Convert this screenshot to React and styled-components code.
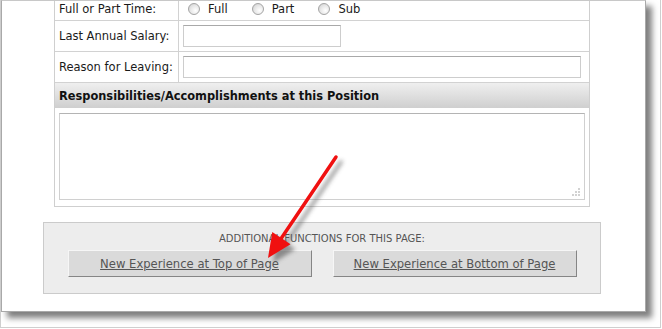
import React from "react";
import styled, { createGlobalStyle } from "styled-components";

const GlobalStyle = createGlobalStyle`
  html, body { margin: 0; padding: 0; background: #ffffff; }
  body { font-family: "DejaVu Sans", Verdana, sans-serif; }
  * { box-sizing: border-box; }
`;

const Frame = styled.div`
  position: relative;
  width: 661px;
  height: 328px;
  border: 1px solid #cfcfcf;
  border-top: none;
  background: #ffffff;
`;

const Paper = styled.div`
  width: 645px;
  height: 312px;
  background: #ffffff;
  border: 1px solid #a9a9a9;
  border-top-color: #c8c8c8;
  box-shadow: 6px 6px 6px rgba(0, 0, 0, 0.5);
  display: flex;
  flex-direction: column;
`;

const FormTable = styled.div`
  margin-left: 52px;
  width: 536px;
  border: 1px solid #cfcfcf;
  border-top: none;
  display: flex;
  flex-direction: column;
`;

const Row = styled.div`
  display: grid;
  grid-template-columns: 124px 1fr;
  height: ${(p) => p.$h}px;
  border-bottom: 1px solid #d2d2d2;
`;

const LabelCell = styled.div`
  border-right: 1px solid #d2d2d2;
  padding: 0 0 ${(p) => p.$pb || 0}px 4px;
  display: flex;
  align-items: center;
  font-size: 11.5px;
  color: #1a1a1a;
  white-space: nowrap;
`;

const ValueCell = styled.div`
  padding: 0 0 ${(p) => p.$pb || 0}px 4px;
  display: flex;
  align-items: center;
`;

const RadioGroup = styled.div`
  display: flex;
  align-items: center;
  gap: 19px;
  font-size: 11.5px;
  color: #1a1a1a;
`;

const RadioOption = styled.label`
  display: flex;
  align-items: center;
  gap: 8px;
`;

const Radio = styled.input.attrs({ type: "radio" })`
  appearance: none;
  -webkit-appearance: none;
  margin: 0 0 0 5px;
  width: 12px;
  height: 12px;
  border-radius: 50%;
  border: 1px solid #a4a4a4;
  background: radial-gradient(circle at 65% 65%, #ffffff 0%, #e6e6e6 55%, #c9c9c9 100%);
`;

const TextInput = styled.input`
  width: ${(p) => p.$w}px;
  height: 22px;
  margin: 0;
  border: 1px solid #cdcdcd;
  border-top-color: #a9a9a9;
  background: #ffffff;
  font-family: inherit;
  font-size: 11px;
`;

const Header = styled.div`
  height: 25px;
  padding: 0 0 0 4px;
  display: flex;
  align-items: center;
  background: linear-gradient(#efefef, #cfcfcf);
  font-size: 11.4px;
  font-weight: bold;
  color: #111111;
  white-space: nowrap;
`;

const AreaCell = styled.div`
  padding: 5px 4px 6px 4px;
`;

const AreaWrap = styled.div`
  position: relative;
  width: 526px;
  height: 87px;
`;

const TextArea = styled.textarea`
  display: block;
  width: 100%;
  height: 100%;
  margin: 0;
  resize: none;
  border: 1px solid #d0d0d0;
  border-top-color: #b4b4b4;
  background: #ffffff;
`;

const Grip = styled.svg`
  position: absolute;
  right: 4px;
  bottom: 3px;
  width: 10px;
  height: 10px;
`;

const Panel = styled.div`
  margin: 15px 0 0 41px;
  width: 558px;
  height: 72px;
  border: 1px solid #cbcbcb;
  background: #ededed;
  padding-top: 9px;
  display: flex;
  flex-direction: column;
  align-items: center;
  gap: 4px;
`;

const PanelTitle = styled.div`
  font-size: 10px;
  line-height: 14px;
  color: #555555;
  text-transform: uppercase;
  white-space: nowrap;
`;

const ButtonRow = styled.div`
  display: flex;
  gap: 21px;
`;

const ActionButton = styled.button`
  width: 244px;
  height: 27px;
  margin: 0;
  padding: 0;
  background: #dadada;
  border: 1px solid;
  border-color: #f6f6f6 #858585 #858585 #f6f6f6;
  font-family: inherit;
  font-size: 11.6px;
  color: #555555;
  text-decoration: underline;
  cursor: pointer;
`;

const ArrowLayer = styled.svg`
  position: absolute;
  left: 0;
  top: 0;
  width: 662px;
  height: 329px;
  pointer-events: none;
`;

function Arrow() {
  const tail = [335, 157];
  const tip = [267, 258];
  const dx = tip[0] - tail[0];
  const dy = tip[1] - tail[1];
  const len = Math.hypot(dx, dy);
  const ux = dx / len;
  const uy = dy / len;
  const hl = 24;
  const hw = 11;
  const bx = tip[0] - ux * hl;
  const by = tip[1] - uy * hl;
  const nx = -uy;
  const ny = ux;
  const head = `${tip[0]},${tip[1]} ${bx + nx * hw},${by + ny * hw} ${bx - nx * hw},${by - ny * hw}`;
  const lineEnd = [tip[0] - ux * (hl - 2), tip[1] - uy * (hl - 2)];
  const shape = (color) => (
    <>
      <line x1={tail[0]} y1={tail[1]} x2={lineEnd[0]} y2={lineEnd[1]} stroke={color} strokeWidth="3.5" strokeLinecap="round" />
      <polygon points={head} fill={color} />
    </>
  );
  return (
    <ArrowLayer viewBox="0 0 662 329">
      <defs>
        <filter id="arrowShadow" x="-20%" y="-20%" width="140%" height="140%">
          <feGaussianBlur stdDeviation="2.2" />
        </filter>
      </defs>
      <g transform="translate(5,5)" filter="url(#arrowShadow)" opacity="0.6">
        {shape("#555555")}
      </g>
      {shape("#f01010")}
    </ArrowLayer>
  );
}

export default function App() {
  return (
    <>
      <GlobalStyle />
      <Frame>
        <Paper>
          <FormTable>
            <Row $h={20}>
              <LabelCell $pb={4}>Full or Part Time:</LabelCell>
              <ValueCell $pb={4}>
                <RadioGroup>
                  <RadioOption><Radio name="fpt" />Full</RadioOption>
                  <RadioOption><Radio name="fpt" />Part</RadioOption>
                  <RadioOption><Radio name="fpt" />Sub</RadioOption>
                </RadioGroup>
              </ValueCell>
            </Row>
            <Row $h={31}>
              <LabelCell>Last Annual Salary:</LabelCell>
              <ValueCell><TextInput $w={158} /></ValueCell>
            </Row>
            <Row $h={31}>
              <LabelCell>Reason for Leaving:</LabelCell>
              <ValueCell><TextInput $w={398} /></ValueCell>
            </Row>
            <Header>Responsibilities/Accomplishments at this Position</Header>
            <AreaCell>
              <AreaWrap>
                <TextArea />
                <Grip viewBox="0 0 10 10">
                  {[[8, 2], [8, 5], [5, 5], [8, 8], [5, 8], [2, 8]].map(([cx, cy]) => (
                    <rect key={`${cx}-${cy}`} x={cx - 0.75} y={cy - 0.75} width="1.5" height="1.5" fill="#b0b0b0" />
                  ))}
                </Grip>
              </AreaWrap>
            </AreaCell>
          </FormTable>
          <Panel>
            <PanelTitle>Additional Functions for this Page:</PanelTitle>
            <ButtonRow>
              <ActionButton>New Experience at Top of Page</ActionButton>
              <ActionButton>New Experience at Bottom of Page</ActionButton>
            </ButtonRow>
          </Panel>
        </Paper>
        <Arrow />
      </Frame>
    </>
  );
}
